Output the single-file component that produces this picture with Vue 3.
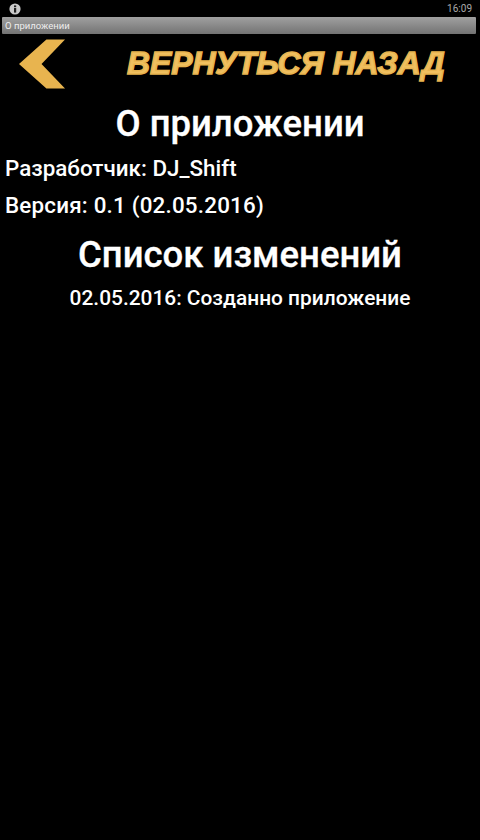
<template>
  <div class="screen">
    <div class="status-bar">
      <svg class="info-icon" viewBox="0 0 12 12" aria-hidden="true">
        <circle cx="6" cy="6" r="5.6" fill="#c9c9c9" />
        <rect x="5" y="5" width="2.2" height="4.6" fill="#222" />
        <rect x="5" y="2.4" width="2.2" height="1.8" fill="#222" />
      </svg>
      <span class="clock">16:09</span>
    </div>
    <div class="title-bar">О приложении</div>

    <button type="button" class="back-button">
      <svg class="back-arrow" viewBox="0 0 48 51" aria-hidden="true">
        <polygon points="28,1 47,1 23,26 47,51 28,51 0,26" fill="#e8b44f" />
      </svg>
      <span class="back-label">ВЕРНУТЬСЯ НАЗАД</span>
    </button>

    <h1 class="heading about-heading">О приложении</h1>
    <p class="info-row">Разработчик: DJ_Shift</p>
    <p class="info-row version-row">Версия: 0.1 (02.05.2016)</p>
    <h2 class="heading changes-heading">Список изменений</h2>
    <p class="change-row">{{ changes[0] }}</p>
  </div>
</template>

<script setup>
const changes = ['02.05.2016: Созданно приложение']
</script>

<style scoped>
.screen {
  width: 480px;
  height: 840px;
  overflow: hidden;
  background: #000;
  color: #fff;
  font-family: Roboto, "Liberation Sans", sans-serif;
}

.status-bar {
  height: 17px;
  display: flex;
  align-items: center;
  justify-content: space-between;
  padding: 0 8px 0 9px;
}
.info-icon {
  width: 12px;
  height: 12px;
}
.clock {
  font-size: 10px;
  color: #aaa;
}

.title-bar {
  height: 17px;
  margin: 0 4px 0 2px;
  padding-left: 3px;
  line-height: 17px;
  font-size: 9.5px;
  color: #eee;
  border-radius: 1px;
  background: linear-gradient(#a0a0a0, #737373);
}

.back-button {
  width: 100%;
  height: 53px;
  margin-top: 3px;
  padding: 0 0 0 19px;
  display: flex;
  align-items: center;
  border: none;
  background: none;
}
.back-arrow {
  width: 47px;
  height: 51px;
  flex: none;
}
.back-label {
  margin-left: 61px;
  font-family: "Liberation Sans", Arial, sans-serif;
  font-size: 31.8px;
  font-style: italic;
  font-weight: 700;
  white-space: nowrap;
  color: #f0c060;
  -webkit-text-stroke: 1.5px #e8b44f;
}

.heading {
  margin: 0;
  font-size: 36.5px;
  font-weight: 500;
  line-height: 40px;
  text-align: center;
  -webkit-text-stroke: 0.3px #fff;
}
.about-heading {
  margin-top: 14px;
}
.changes-heading {
  margin-top: 11px;
}

.info-row {
  margin: 0;
  padding-left: 5px;
  font-size: 22.4px;
  font-weight: 500;
  line-height: 37px;
}
.about-heading + .info-row {
  margin-top: 6px;
}
.version-row {
  letter-spacing: 0.2px;
}
.change-row {
  margin: 11px 0 0;
  text-align: center;
  font-size: 20.9px;
  font-weight: 500;
  line-height: 24px;
}
</style>

<style>
body {
  background: #000;
}
</style>
